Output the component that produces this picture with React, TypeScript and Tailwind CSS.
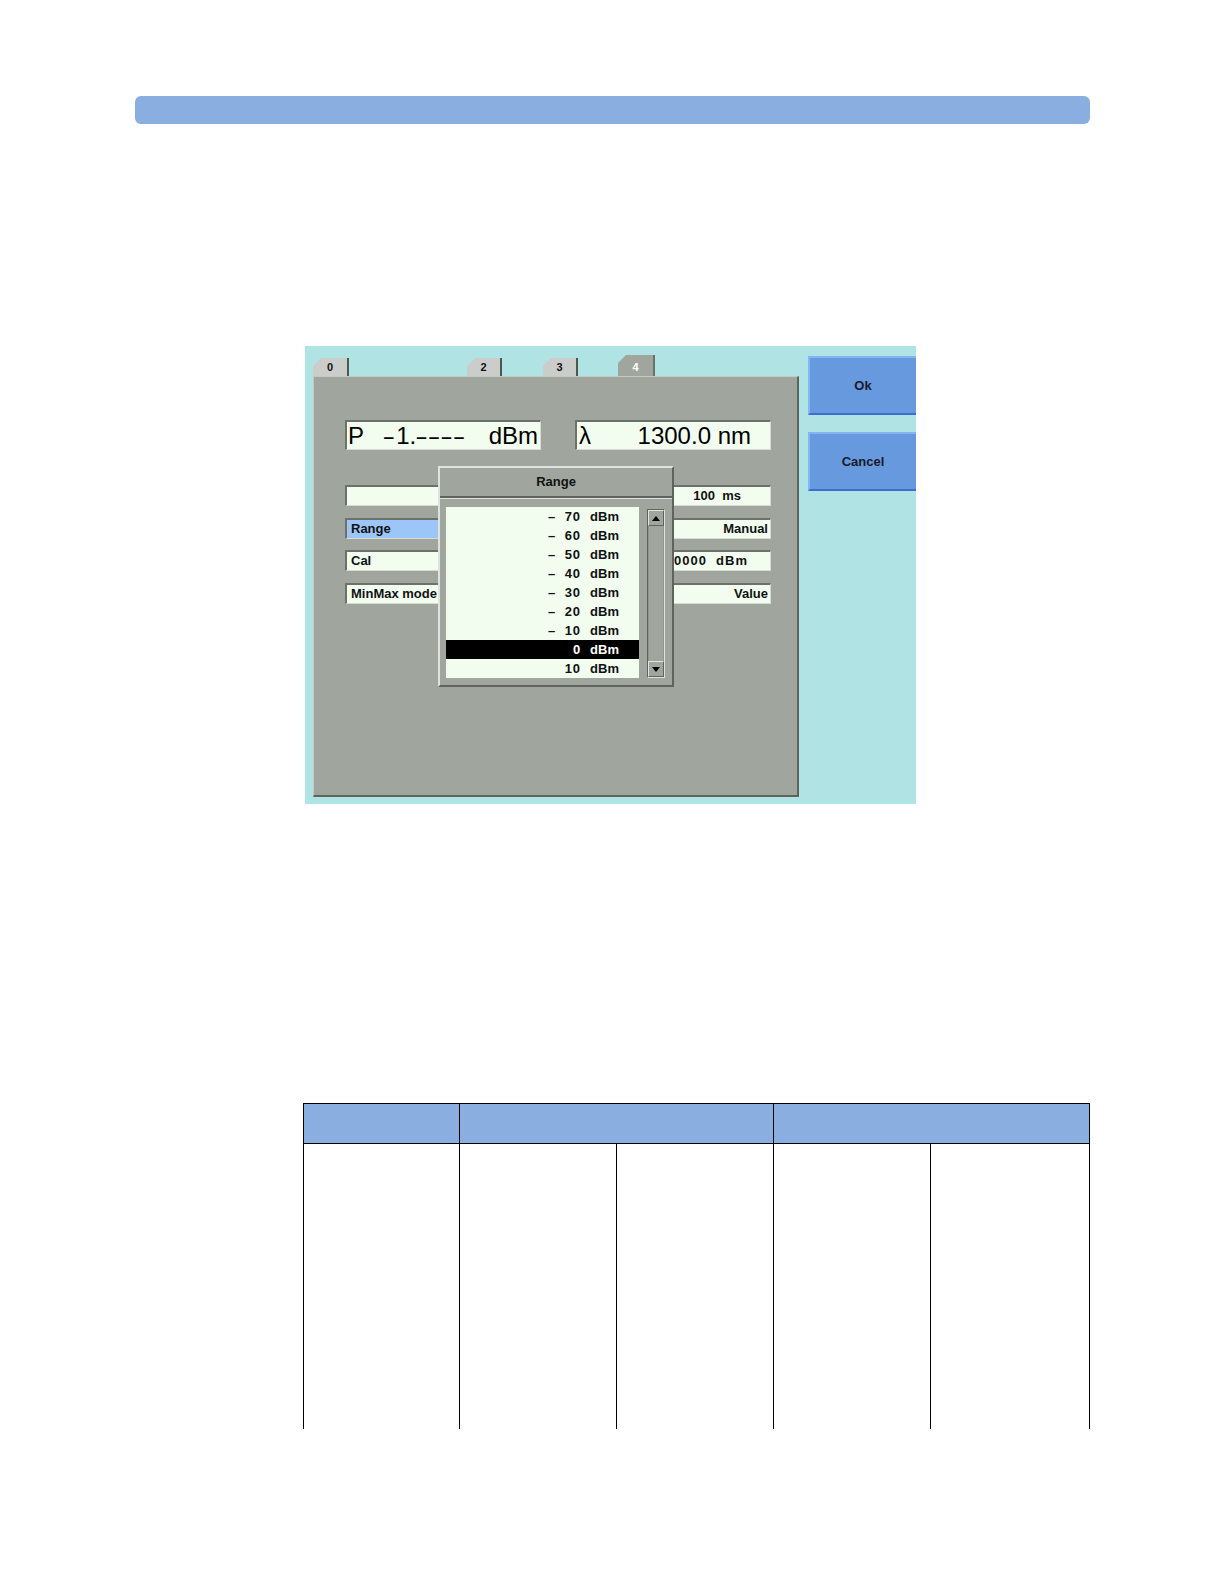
import React from 'react';

const font = "font-['Liberation_Sans',Arial,sans-serif]";

const ranges: { sign: string; value: string }[] = [
  { sign: '-', value: '70' },
  { sign: '-', value: '60' },
  { sign: '-', value: '50' },
  { sign: '-', value: '40' },
  { sign: '-', value: '30' },
  { sign: '-', value: '20' },
  { sign: '-', value: '10' },
  { sign: '', value: '0' },
  { sign: '', value: '10' },
];

const Field: React.FC<{ text?: string; blue?: boolean; className?: string }> = ({ text, blue, className }) => (
  <div
    className={`h-[21px] w-[196px] border-t-2 border-l-2 border-[#6b716b] border-b border-r border-b-[#d6dbd6] border-r-[#d6dbd6] flex items-center overflow-hidden whitespace-pre text-[13px] font-bold text-[#111] ${
      blue ? 'bg-[#9cc6f8]' : 'bg-[#f2fdf0]'
    } ${className ?? ''}`}
  >
    {text}
  </div>
);

const Tab: React.FC<{ label: string; active?: boolean; className?: string }> = ({ label, active, className }) => (
  <div
    className={`flex items-end justify-center pb-[1px] text-[11px] font-bold [clip-path:polygon(8px_0,100%_0,100%_100%,0_100%,0_8px)] ${
      active ? 'h-[21px] bg-[#a0a69e] text-white border-r-2 border-[#6b716b]' : 'h-[18px] bg-[#cacdca] text-[#111] border-r-2 border-[#4f554f]'
    } ${className ?? ''}`}
  >
    {label}
  </div>
);

const Button: React.FC<{ label: string }> = ({ label }) => (
  <div className="h-[59px] w-[108px] bg-[#6699dd] border-t-2 border-l-2 border-[#86b3f2] border-b-2 border-b-[#3f6cd0] flex items-center justify-center text-[13px] font-bold text-[#1a1a2a]">
    {label}
  </div>
);

const Arrow: React.FC<{ up?: boolean }> = ({ up }) => (
  <div className="h-[16px] w-full border-t border-l border-[#e2e6e2] border-b border-r border-b-[#5d635d] border-r-[#5d635d] flex items-center justify-center">
    <svg width="8" height="5" viewBox="0 0 8 5">
      {up ? <polygon points="4,0 8,5 0,5" fill="#000" /> : <polygon points="0,0 8,0 4,5" fill="#000" />}
    </svg>
  </div>
);

const Dropdown: React.FC = () => (
  <div className="absolute left-[124px] top-[89px] w-[236px] h-[221px] bg-[#a0a69e] border-t-2 border-l-2 border-[#dfe3df] border-b-2 border-r-2 border-b-[#5d635d] border-r-[#5d635d]">
    <div className="h-[30px] flex items-center justify-center text-[13px] font-bold text-[#111] border-b-2 border-[#5d635d]">
      Range
    </div>
    <div className="h-px bg-[#dfe3df]" />
    <div className="flex mt-[8px] ml-[6px]">
      <div className="w-[193px] h-[171px] bg-[#f2fdf0] flex flex-col">
        {ranges.map((r, i) => (
          <div
            key={i}
            className={`h-[19px] flex items-center justify-end pr-[20px] text-[13px] font-bold ${
              i === 7 ? 'bg-black text-white' : 'text-[#111]'
            }`}
          >
            <span className="w-[7px]">{r.sign ? '–' : ''}</span>
            <span className="w-[26px] text-right tracking-[1px]">{r.value}</span>
            <span className="ml-[9px]">dBm</span>
          </div>
        ))}
      </div>
      <div className="ml-[8px] mt-[2px] w-[18px] h-[169px] border-t border-l border-[#5d635d] border-b border-r border-b-[#dfe3df] border-r-[#dfe3df] flex flex-col">
        <Arrow up />
        <div className="flex-1 border-x border-[#8f958e]" />
        <Arrow />
      </div>
    </div>
  </div>
);

const Instrument: React.FC = () => (
  <div className={`w-[611px] h-[458px] bg-[#b0e4e4] flex pl-[8px] pt-[9px] ${font}`}>
    <div className="flex flex-col w-[486px]">
      <div className="h-[21px] flex items-end">
        <Tab label="0" className="w-[36px]" />
        <Tab label="2" className="w-[35px] ml-[118px]" />
        <Tab label="3" className="w-[35px] ml-[41px]" />
        <Tab label="4" active className="w-[37px] ml-[40px]" />
      </div>
      <div className="relative h-[421px] bg-[#a0a69e] border-l border-t border-[#c2c7c1] border-r-2 border-b-2 border-r-[#5d635d] border-b-[#5d635d]">
        <div className="flex gap-[34px] ml-[31px] mt-[43px]">
          <div className="h-[30px] w-[196px] bg-[#f2fdf0] border-t-2 border-l-2 border-[#6b716b] border-b border-r border-b-[#d6dbd6] border-r-[#d6dbd6] flex items-center justify-between px-[1px] text-[24px] leading-none text-black whitespace-pre">
            <span>
              {'P   '}
              <span className="relative -top-[1px] text-[19px] font-bold tracking-[2px]">–</span>1.
              <span className="relative -top-[1px] text-[19px] font-bold tracking-[2px]">––––</span>
            </span>
            <span className="pr-[1px]">dBm</span>
          </div>
          <div className="h-[30px] w-[196px] bg-[#f2fdf0] border-t-2 border-l-2 border-[#6b716b] border-b border-r border-b-[#d6dbd6] border-r-[#d6dbd6] flex items-center justify-between px-[2px] text-[24px] leading-none text-black whitespace-pre">
            <span>λ</span>
            <span className="pr-[17px]">1300.0 nm</span>
          </div>
        </div>
        <div className="flex gap-[34px] ml-[31px] mt-[35px]">
          <div className="flex flex-col gap-[11.5px]">
            <Field />
            <Field text="Range" blue className="pl-[4px]" />
            <Field text="Cal" className="pl-[4px]" />
            <Field text="MinMax mode" className="pl-[4px]" />
          </div>
          <div className="flex flex-col gap-[11.5px]">
            <Field text="100  ms" className="justify-end pr-[29px]" />
            <Field text="Manual" className="justify-end pr-[2px]" />
            <Field text="-100.0000  dBm" className="justify-end pr-[22px] tracking-[1px]" />
            <Field text="Value" className="justify-end pr-[2px]" />
          </div>
        </div>
        <Dropdown />
      </div>
    </div>
    <div className="ml-[9px] pt-[1px] flex flex-col gap-[17px]">
      <Button label="Ok" />
      <Button label="Cancel" />
    </div>
  </div>
);

export default function App() {
  return (
    <div className="bg-white flex flex-col pb-[100px]">
      <div className="mt-[96px] ml-[135px] w-[955px] h-[28px] rounded-[6px] bg-[#8aaee0]" />
      <div className="mt-[222px] ml-[305px]">
        <Instrument />
      </div>
      <div className="mt-[299px] ml-[303px] w-[787px]">
        <div className="flex h-[41px] bg-[#8aaee0] border-[1.5px] border-black">
          <div className="w-[156px] border-r-[1.5px] border-black" />
          <div className="w-[314px] border-r-[1.5px] border-black" />
          <div className="flex-1" />
        </div>
        <div className="flex h-[285px] border-l-[1.5px] border-r-[1.5px] border-black">
          <div className="w-[156px] border-r-[1.5px] border-black" />
          <div className="w-[157px] border-r-[1.5px] border-black" />
          <div className="w-[157px] border-r-[1.5px] border-black" />
          <div className="w-[157px] border-r-[1.5px] border-black" />
          <div className="flex-1" />
        </div>
      </div>
    </div>
  );
}
